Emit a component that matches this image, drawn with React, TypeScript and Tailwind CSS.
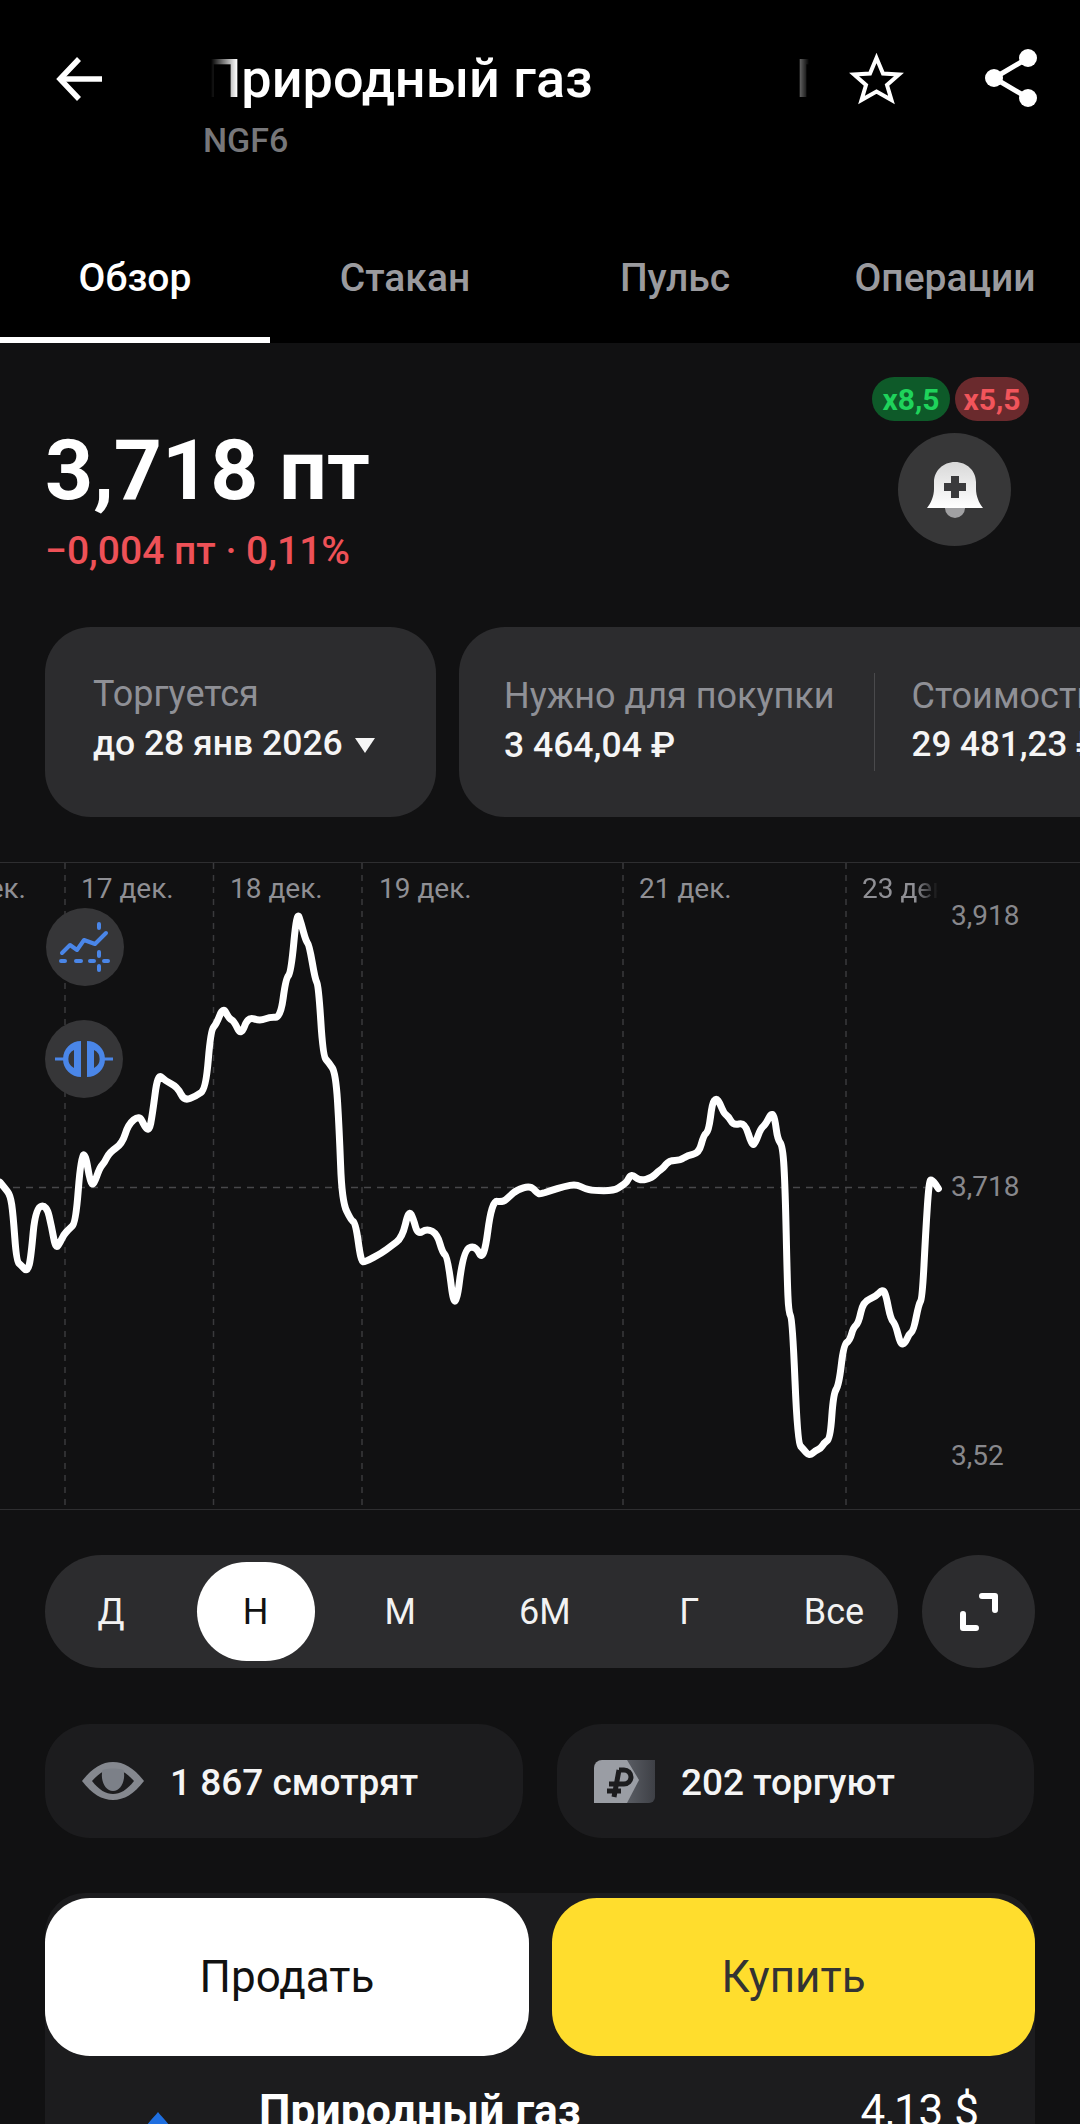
const FONT = "font-['Roboto','Noto_Sans',sans-serif]";

// chart points traced from the picture: [x, y] in page pixels
const leftRaw = [
  [0, 775], [15, 790], [30, 805], [38, 850], [48, 960], [62, 970], [80, 985], [90, 950], [103, 835], [135, 828],
  [150, 880], [162, 932], [175, 915], [185, 898], [200, 885], [220, 870], [235, 715], [248, 708], [262, 775],
  [272, 782], [290, 740], [303, 730], [318, 705], [355, 685], [372, 640], [405, 618], [420, 645], [433, 655],
  [442, 620], [458, 520], [480, 538], [515, 552], [535, 585], [570, 573], [598, 557], [612, 420], [628, 405],
  [648, 365], [665, 392], [680, 398], [700, 433], [720, 388], [755, 398], [785, 388], [815, 390], [830, 298],
  [845, 285], [862, 140], [875, 170], [888, 210], [898, 220], [915, 300], [925, 315], [938, 480], [955, 495],
  [975, 520], [985, 650], [993, 820], [1020, 865], [1033, 870], [1048, 960], [1060, 962], [1110, 940], [1135, 925],
  [1168, 905], [1187, 840], [1200, 860], [1213, 898], [1240, 883], [1270, 897], [1285, 940], [1300, 950],
  [1322, 1090], [1345, 935], [1380, 922], [1405, 962], [1428, 818], [1460, 822], [1480, 808], [1500, 793],
  [1540, 783], [1560, 800],
];
const rightRaw = [
  [0, 803], [30, 795], [70, 785], [105, 780], [130, 790], [155, 795], [215, 795], [240, 782], [252, 775], [265, 755],
  [290, 772], [325, 765], [345, 748], [358, 742], [375, 724], [408, 724], [428, 712], [462, 707], [475, 665],
  [490, 655], [500, 590], [512, 578], [522, 590], [535, 615], [548, 622], [562, 642], [595, 635], [615, 688],
  [625, 685], [640, 650], [655, 640], [672, 612], [682, 625], [690, 675], [705, 690], [712, 790], [718, 1000],
  [722, 1080], [733, 1095], [748, 1385], [765, 1400], [782, 1416], [800, 1403], [815, 1398], [825, 1385], [843, 1375],
  [852, 1270], [868, 1250], [882, 1155], [900, 1145], [910, 1115], [925, 1105], [938, 1055], [975, 1043], [995, 1025],
  [1005, 1040], [1018, 1095], [1032, 1107], [1047, 1155], [1060, 1152], [1072, 1130], [1085, 1122], [1100, 1060],
  [1110, 1048], [1120, 890], [1130, 770], [1140, 770], [1157, 790],
];
const pts = [
  ...leftRaw.map(([x, y]) => [x / 2.904, y / 2.34 - 12]),
  ...rightRaw.map(([x, y]) => [540 + x / 2.904, y / 2.34 - 12]),
];

// rounds the corners a little, the real line is smoothed too
function smoothPath(p: number[][]) {
  let d = `M${p[0][0].toFixed(1)} ${p[0][1].toFixed(1)}`;
  for (let i = 1; i < p.length - 1; i++) {
    const mx = (p[i][0] + p[i + 1][0]) / 2;
    const my = (p[i][1] + p[i + 1][1]) / 2;
    d += ` Q${p[i][0].toFixed(1)} ${p[i][1].toFixed(1)} ${mx.toFixed(1)} ${my.toFixed(1)}`;
  }
  const last = p[p.length - 1];
  return `${d} L${last[0].toFixed(1)} ${last[1].toFixed(1)}`;
}

const gridLines = [65, 213.5, 362, 623, 846];

const dateLabels = [
  { text: 'ек.', left: 'left-0', width: 'w-[26px]', dir: 'justify-end' },
  { text: '17 дек.', left: 'left-[81px]', width: 'w-[100px]', dir: '' },
  { text: '18 дек.', left: 'left-[230px]', width: 'w-[100px]', dir: '' },
  { text: '19 дек.', left: 'left-[379px]', width: 'w-[100px]', dir: '' },
  { text: '21 дек.', left: 'left-[639px]', width: 'w-[100px]', dir: '' },
];

function Chart() {
  return (
    <div className="relative mt-[45px] h-[648px] border-y border-[#2e2e30]">
      <svg className="absolute inset-0" width="1080" height="646" viewBox="0 0 1080 646" fill="none">
        {gridLines.map((x) => (
          <line key={x} x1={x} x2={x} y1="0" y2="646" stroke="#3a3a3c" strokeWidth="1.5" strokeDasharray="6 6" />
        ))}
        <line x1="0" x2="930" y1="324.5" y2="324.5" stroke="#47474a" strokeWidth="1.5" strokeDasharray="7 6" />
        <path d={smoothPath(pts)} stroke="#fff" strokeWidth="7" strokeLinejoin="round" strokeLinecap="round" />
      </svg>

      {dateLabels.map((d) => (
        <div key={d.text} className={`absolute top-[9px] flex overflow-hidden whitespace-nowrap text-[28px] leading-[34px] text-[#8f8f94] ${d.left} ${d.width} ${d.dir}`}>
          {d.text}
        </div>
      ))}
      <div className="absolute left-[862px] top-[9px] w-[76px] overflow-hidden whitespace-nowrap text-[28px] leading-[34px] text-[#8f8f94] [mask-image:linear-gradient(to_right,black_70%,transparent)]">
        23 дек.
      </div>

      <div className="absolute left-[951px] top-[36px] text-[28px] leading-[34px] text-[#88888c]">3,918</div>
      <div className="absolute left-[951px] top-[307px] text-[28px] leading-[34px] text-[#88888c]">3,718</div>
      <div className="absolute left-[951px] top-[576px] text-[28px] leading-[34px] text-[#88888c]">3,52</div>

      <div className="absolute left-[46px] top-[45px] flex size-[78px] items-center justify-center rounded-full bg-[#363638]">
        <svg width="60" height="60" viewBox="0 0 60 60" fill="none" stroke="#4a86e8" strokeWidth="4" strokeLinecap="round" strokeLinejoin="round">
          <path d="M7 36 L15 28 L22 33 L29 23 L40 27 L51 16" />
          <path d="M6 44 H10 M21 44 H26 M35 44 H39 M49 44 H53" />
          <path d="M44 7 V11 M44 35 V39 M44 49 V53" />
        </svg>
      </div>
      <div className="absolute left-[45px] top-[157px] flex size-[78px] items-center justify-center rounded-full bg-[#363638]">
        <svg width="58" height="36" viewBox="0 0 58 36" fill="#4a86e8">
          <path d="M0 16.5 H11 V19.5 H0 Z M47 16.5 H58 V19.5 H47 Z" />
          <path d="M26 0 V36 A18 18 0 0 1 26 0 Z M19 9 A10 10 0 0 0 19 27 Z" fillRule="evenodd" />
          <path d="M32 0 A18 18 0 0 1 32 36 Z M39 9 V27 A10 10 0 0 0 39 9 Z" fillRule="evenodd" />
        </svg>
      </div>
    </div>
  );
}

function RangeBar() {
  const items = ['Д', 'Н', 'М', '6М', 'Г', 'Все'];
  return (
    <div className="mt-[45px] flex gap-[24px] px-[45px]">
      <div className="flex h-[113px] w-[853px] items-center justify-between rounded-full bg-[#2c2c2e] pl-[7px] pr-[5px]">
        {items.map((item) => (
          <div
            key={item}
            className={
              item === 'Н'
                ? 'flex h-[99px] w-[118px] items-center justify-center rounded-full bg-white text-[36px] text-[#111]'
                : 'flex h-[99px] w-[118px] items-center justify-center text-[36px] text-[#f2f2f2]'
            }
          >
            {item}
          </div>
        ))}
      </div>
      <div className="flex size-[113px] items-center justify-center rounded-full bg-[#2c2c2e]">
        <svg width="38" height="38" viewBox="0 0 38 38" fill="none" stroke="#fff" strokeWidth="6" strokeLinecap="round" strokeLinejoin="round">
          <path d="M22 3 H35 V17" />
          <path d="M3 21 V35 H16" />
        </svg>
      </div>
    </div>
  );
}

function Stats() {
  return (
    <div className="mt-[56px] flex gap-[34px] px-[45px]">
      <div className="flex h-[114px] w-[478px] items-center gap-[26px] rounded-[45px] bg-[#1c1c1e] pl-[37px]">
        <svg width="62" height="38" viewBox="0 0 62 38" className="shrink-0">
          <path d="M0 19 C10 6 20 0 31 0 C42 0 52 6 62 19 C52 32 42 38 31 38 C20 38 10 32 0 19 Z" fill="#85888f" />
          <path d="M10 19 C17 11 24 7 31 7 C38 7 45 11 52 19 C45 28 38 32 31 32 C24 32 17 28 10 19 Z" fill="#1c1c1e" />
          <path d="M20.5 8 C27 6 35 6 41.5 8 C44 18 39 29 31 29 C23 29 18 18 20.5 8 Z" fill="#7c8088" />
        </svg>
        <span className="mt-[3px] text-[37px] font-medium text-[#f5f5f5]">1 867 смотрят</span>
      </div>
      <div className="flex h-[114px] w-[477px] items-center gap-[26px] rounded-[45px] bg-[#1c1c1e] pl-[37px]">
        <svg width="61" height="43" viewBox="0 0 61 43" className="shrink-0">
          <defs>
            <linearGradient id="tail" x1="0" x2="1">
              <stop offset="0" stopColor="#5c5f66" />
              <stop offset="1" stopColor="#3e4046" />
            </linearGradient>
          </defs>
          <path d="M30 0 H61 V37 A6 6 0 0 1 55 43 H30 Z" fill="url(#tail)" />
          <path d="M8 0 H33 L45 20 L33 43 H0 V8 A8 8 0 0 1 8 0 Z" fill="#9a9da4" />
          <path d="M25 10 H30 A7 7 0 0 1 30 24 H15 M13 31 H27 M25 10 L20 37" fill="none" stroke="#1c1c1e" strokeWidth="5" />
        </svg>
        <span className="mt-[3px] text-[37px] font-medium text-[#f5f5f5]">202 торгуют</span>
      </div>
    </div>
  );
}

export default function App() {
  return (
    <div className={`h-[2124px] w-[1080px] overflow-hidden bg-[#111112] ${FONT}`}>
      <header className="h-[343px] bg-black">
        <div className="flex h-[232px] items-start">
          <div className="flex w-[203px] shrink-0 pl-[56px] pt-[57px]">
            <svg width="46" height="44" viewBox="0 0 46 44" fill="none" stroke="#fff" strokeWidth="5.5">
              <path d="M23 2 L4 22 L23 42" />
              <path d="M5 22 H46" />
            </svg>
          </div>
          <div className="w-[606px] shrink-0 pt-[45px]">
            <div className="flex gap-[203px] overflow-hidden whitespace-nowrap text-[54px] font-medium leading-[68px] text-white [mask-image:linear-gradient(to_right,transparent_8px,black_34px,black_96%,transparent)]">
              <span>Природный газ</span>
              <span>Природный газ</span>
            </div>
            <div className="mt-[7px] text-[34px] font-medium leading-[40px] text-[#77777a]">NGF6</div>
          </div>
          <div className="ml-[40px] pt-[53px]">
            <svg width="55" height="52" viewBox="0 0 55 52" fill="none" stroke="#fff" strokeWidth="4" className="overflow-visible">
              <path d="M27.5 5 L34 20.5 L50 21.5 L38 32 L42.5 47 L27.5 38.5 L12.5 47 L17 32 L5 21.5 L21 20.5 Z" />
            </svg>
          </div>
          <div className="ml-[80px] pt-[48px]">
            <svg width="54" height="60" viewBox="0 0 54 60" fill="none">
              <path d="M44 10 L10 30 L44 50" stroke="#fff" strokeWidth="5" />
              <circle cx="44" cy="10" r="9" fill="#fff" />
              <circle cx="10" cy="30" r="9" fill="#fff" />
              <circle cx="44" cy="50" r="9" fill="#fff" />
            </svg>
          </div>
        </div>
        <nav className="flex h-[111px]">
          {['Обзор', 'Стакан', 'Пульс', 'Операции'].map((tab, i) => (
            <div
              key={tab}
              className={
                i === 0
                  ? 'flex w-[270px] items-start justify-center border-b-[6px] border-white pt-[22px] text-[39px] font-medium leading-[48px] text-white'
                  : 'flex w-[270px] items-start justify-center pt-[22px] text-[39px] font-medium leading-[48px] text-[#9a9a9e]'
              }
            >
              {tab}
            </div>
          ))}
        </nav>
      </header>

      <section className="relative flex h-[284px] flex-col px-[45px]">
        <div className="mt-[79px] text-[84px] font-bold leading-[98px] text-white">3,718 пт</div>
        <div className="mt-[7px] text-[39px] font-medium leading-[48px] text-[#ee5157]">−0,004 пт · 0,11%</div>
        <div className="absolute left-[872px] top-[34px] flex gap-[5px]">
          <div className="flex h-[44px] w-[78px] items-center justify-center rounded-full bg-[#0e5a29] text-[30px] font-bold text-[#1fd35b]">x8,5</div>
          <div className="flex h-[44px] w-[74px] items-center justify-center rounded-full bg-[#6a2a2d] text-[30px] font-bold text-[#f2555b]">x5,5</div>
        </div>
        <div className="absolute left-[898px] top-[90px] flex size-[113px] items-center justify-center rounded-full bg-[#373738]">
          <svg width="56" height="56" viewBox="0 0 56 56">
            <defs>
              <linearGradient id="bell" x1="0" x2="0" y1="0" y2="1">
                <stop offset="0" stopColor="#d8d8d8" />
                <stop offset="1" stopColor="#fff" />
              </linearGradient>
            </defs>
            <path d="M18 46 H38 A10 10 0 0 1 18 46 Z" fill="#a0a0a2" />
            <path d="M28 0 C40 0 49 9 49 20 V27 C49 34 52 41 56 46 H0 C4 41 7 34 7 27 V20 C7 9 16 0 28 0 Z" fill="url(#bell)" />
            <path d="M24 14 H32 V21 H39 V29 H32 V36 H24 V29 H17 V21 H24 Z" fill="#3a3a3c" />
          </svg>
        </div>
      </section>

      <div className="flex gap-[23px] overflow-hidden pl-[45px]">
        <div className="h-[190px] w-[391px] shrink-0 rounded-[46px] bg-[#2c2c2e] pl-[48px] pt-[44px]">
          <div className="text-[36px] leading-[46px] text-[#8f9096]">Торгуется</div>
          <div className="mt-[3px] flex items-center gap-[12px] text-[35.5px] font-medium leading-[46px] text-[#f5f5f5]">
            до 28 янв 2026
            <span className="mt-[4px] h-0 w-0 border-x-[10px] border-t-[15px] border-x-transparent border-t-[#f5f5f5]" />
          </div>
        </div>
        <div className="flex h-[190px] shrink-0 items-center rounded-l-[46px] bg-[#2c2c2e] pb-[4px] pl-[45px]">
          <div>
            <div className="text-[36px] leading-[46px] text-[#8f9096]">Нужно для покупки</div>
            <div className="mt-[3px] text-[35.5px] font-medium leading-[46px] text-[#f5f5f5]">3 464,04 ₽</div>
          </div>
          <div className="ml-[39px] mr-[37px] mt-[4px] h-[98px] w-[1px] bg-[#4a4a4c]" />
          <div>
            <div className="text-[36px] leading-[46px] text-[#8f9096]">Стоимость</div>
            <div className="mt-[3px] text-[35px] font-medium leading-[46px] text-[#f5f5f5]">29 481,23 ₽</div>
          </div>
        </div>
      </div>

      <Chart />
      <RangeBar />
      <Stats />

      <div className="relative mx-[45px] mt-[55px] h-[300px] rounded-t-[40px] bg-[#1c1c1e]">
        <div className="flex gap-[23px] pt-[5px]">
          <div className="flex h-[158px] w-[484px] items-center justify-center rounded-[45px] bg-white text-[44px] text-[#111]">Продать</div>
          <div className="flex h-[158px] w-[483px] items-center justify-center rounded-[45px] bg-[#ffdd2d] text-[44px] text-[#333]">Купить</div>
        </div>
        <div className="flex items-start justify-between pl-[214px] pr-[56px] pt-[27px]">
          <span className="text-[44.5px] font-bold leading-[56px] text-white">Природный газ</span>
          <span className="text-[44px] leading-[56px] text-white">4,13 $</span>
        </div>
        <svg className="absolute left-[95px] top-[219px]" width="36" height="40" viewBox="0 0 36 40">
          <path d="M18 0 C22 6 34 14 34 28 A16 14 0 0 1 2 28 C2 14 14 6 18 0 Z" fill="#1f6fe0" />
        </svg>
      </div>
    </div>
  );
}
